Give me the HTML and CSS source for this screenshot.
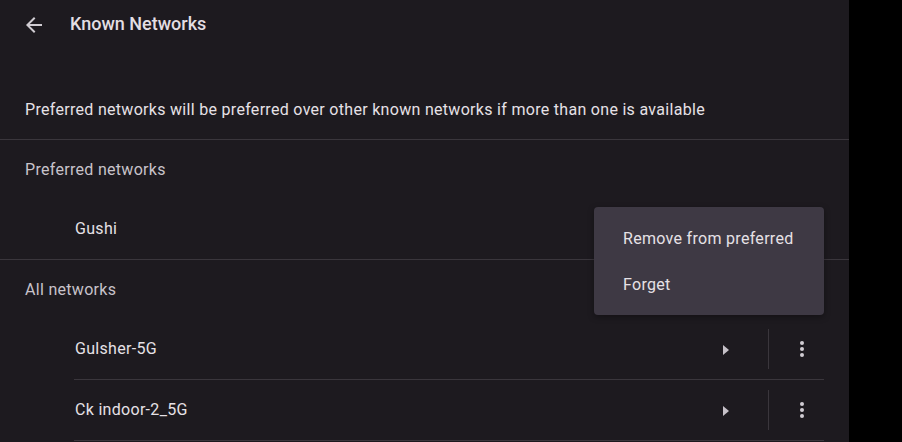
FILE: index.html
```html
<!DOCTYPE html>
<html>
<head>
<meta charset="utf-8">
<link rel="stylesheet" href="styles.css">
</head>
<body>
<div class="page">
  <header class="topbar">
    <svg class="back" viewBox="0 0 24 24" width="24" height="24"><path d="M20 11H7.83l5.59-5.59L12 4l-8 8 8 8 1.41-1.41L7.83 13H20v-2z"/></svg>
    <h1 class="title">Known Networks</h1>
  </header>
  <p class="desc">Preferred networks will be preferred over other known networks if more than one is available</p>
  <section class="section">
    <div class="sec-head">Preferred networks</div>
    <div class="row">
      <span class="name">Gushi</span>
      <span class="arrow-btn"><span class="tri"></span></span>
      <span class="sep"></span>
      <span class="dots-btn"><span class="dot"></span><span class="dot"></span><span class="dot"></span></span>
    </div>
  </section>
  <section class="section">
    <div class="sec-head">All networks</div>
    <div class="row bordered">
      <span class="name">Gulsher-5G</span>
      <span class="arrow-btn"><span class="tri"></span></span>
      <span class="sep"></span>
      <span class="dots-btn"><span class="dot"></span><span class="dot"></span><span class="dot"></span></span>
    </div>
    <div class="row bordered">
      <span class="name">Ck indoor-2_5G</span>
      <span class="arrow-btn"><span class="tri"></span></span>
      <span class="sep"></span>
      <span class="dots-btn"><span class="dot"></span><span class="dot"></span><span class="dot"></span></span>
    </div>
  </section>
  <div class="menu">
    <div class="menu-item">Remove from preferred</div>
    <div class="menu-item">Forget</div>
  </div>
</div>
</body>
</html>
```
FILE: styles.css
```css
html, body {
  margin: 0;
  padding: 0;
  background: #000;
  height: 100%;
  overflow: hidden;
}
.page {
  position: relative;
  width: 849px;
  height: 442px;
  background: #1d1a1f;
  font-family: Roboto, "Noto Sans", sans-serif;
  color: #e6e1e6;
  font-size: 16px;
  letter-spacing: 0.3px;
}
.topbar {
  display: flex;
  align-items: center;
  height: 48px;
  padding-left: 22px;
  gap: 24px;
}
.back {
  fill: #d0ccd2;
  margin-top: 1px;
}
.title {
  margin: 0;
  font-size: 18px;
  font-weight: 500;
  letter-spacing: 0;
  color: #e3dee3;
  margin-top: -2px;
}
.desc {
  margin: 0;
  padding: 52px 0 19px 25px;
  line-height: 20px;
  border-bottom: 1px solid #3a363c;
}
.section + .section {
  border-top: 1px solid #3a363c;
}
.sec-head {
  height: 59px;
  display: flex;
  align-items: center;
  padding-left: 25px;
  color: #c8c3ca;
}
.row {
  display: flex;
  align-items: center;
  height: 60px;
  margin: 0 25px 0 74px;
}
.row.bordered {
  border-bottom: 1px solid #3a363c;
}
.name {
  flex: 1;
  padding-left: 1px;
  margin-bottom: 2px;
}
.arrow-btn {
  width: 40px;
  height: 40px;
  display: flex;
  align-items: center;
  justify-content: center;
  margin-right: 22px;
  padding-top: 1px;
}
.tri {
  width: 0;
  height: 0;
  border-top: 5.5px solid transparent;
  border-bottom: 5.5px solid transparent;
  border-left: 6px solid #c6c1c8;
}
.sep {
  width: 1px;
  height: 40px;
  background: #3a363c;
  margin-right: 10px;
}
.dots-btn {
  width: 45px;
  height: 40px;
  display: flex;
  flex-direction: column;
  align-items: center;
  justify-content: center;
  gap: 2px;
}
.dot {
  width: 4px;
  height: 4px;
  border-radius: 50%;
  background: #d0ccd2;
}
.menu {
  position: absolute;
  left: 594px;
  top: 207px;
  width: 230px;
  padding: 8px 0;
  background: #3e3944;
  border-radius: 4px;
  box-shadow: 0 2px 6px rgba(0,0,0,0.35);
}
.menu-item {
  height: 46px;
  display: flex;
  align-items: center;
  padding-left: 29px;
  color: #e6e1e6;
}
```
